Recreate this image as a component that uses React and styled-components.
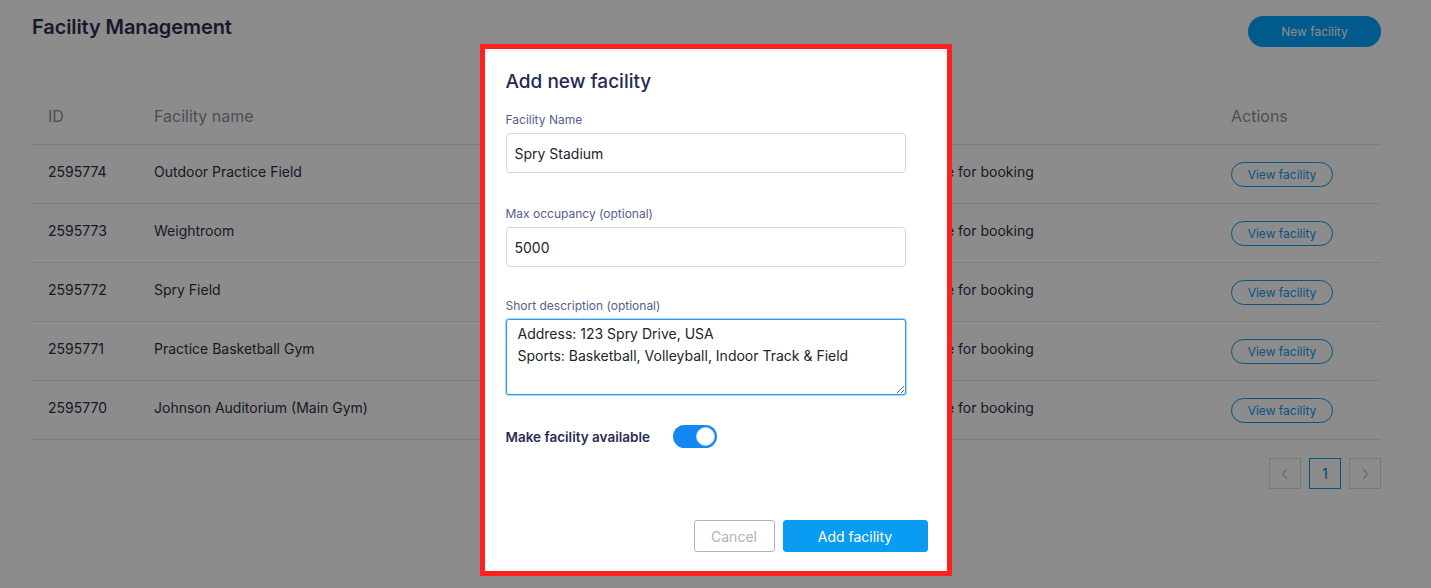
import React from "react";
import styled, { createGlobalStyle } from "styled-components";

const GlobalStyle = createGlobalStyle`
  * { box-sizing: border-box; }
  html, body { margin: 0; padding: 0; background: #ffffff; }
  body { font-family: Inter, "Noto Sans", "Liberation Sans", sans-serif; color: #2a2c4c; }
`;

const Page = styled.div`
  padding: 16px 50px 40px 32px;
  min-height: 588px;
`;

const Header = styled.header`
  display: flex;
  justify-content: space-between;
  align-items: flex-start;
`;

const PageTitle = styled.h1`
  margin: 0;
  font-size: 20px;
  line-height: 22px;
  font-weight: 600;
  color: #2b2e55;
  letter-spacing: -0.1px;
`;

const PrimaryPill = styled.button`
  width: 133px;
  height: 31px;
  border: none;
  border-radius: 16px;
  background: #00a4ff;
  color: #ffffff;
  font-family: inherit;
  font-size: 12px;
`;

const Table = styled.div`
  margin-top: 40px;
  display: grid;
  grid-template-columns: 106px 741px 336px 166px;
`;

const HeadCell = styled.div`
  height: 58px;
  display: flex;
  align-items: center;
  padding-left: 16px;
  font-size: 16px;
  color: #8b919b;
  border-bottom: 1px solid #e6e6e9;
`;

const Cell = styled.div`
  height: 59px;
  display: flex;
  align-items: center;
  padding-left: 16px;
  padding-bottom: 6px;
  font-size: 14px;
  color: #2e3048;
  border-bottom: 1px solid #e6e6e9;
  white-space: nowrap;
`;

const ActionCell = styled(Cell)`
  padding-bottom: 0;
`;

const OutlinePill = styled.button`
  width: 102px;
  height: 25px;
  border: 1px solid #0f9af0;
  border-radius: 13px;
  background: #ffffff;
  color: #0f9af0;
  font-family: inherit;
  font-size: 12px;
  padding: 0;
`;

const Pager = styled.nav`
  display: flex;
  justify-content: flex-end;
  gap: 8px;
  margin-top: 18px;
`;

const PageBox = styled.div`
  width: 32px;
  height: 31px;
  display: flex;
  align-items: center;
  justify-content: center;
  border: 1px solid ${(p) => (p.$active ? "#0f9af0" : "#dcdde2")};
  color: ${(p) => (p.$active ? "#0f9af0" : "#b8bac2")};
  font-size: 14px;
  font-weight: 500;
`;

const Overlay = styled.div`
  position: fixed;
  inset: 0;
  background: rgba(0, 0, 0, 0.45);
`;

const Modal = styled.div`
  position: fixed;
  top: 44px;
  left: 50%;
  transform: translateX(-50%);
  width: 472px;
  height: 532px;
  background: #ffffff;
  border: 5px solid #ff2020;
  padding: 21px 19px 19px 21px;
  display: flex;
  flex-direction: column;
`;

const ModalTitle = styled.h2`
  margin: 0;
  font-size: 19px;
  line-height: 24px;
  font-weight: 500;
  color: #262a52;
`;

const Form = styled.form`
  margin-top: 18px;
  display: flex;
  flex-direction: column;
  flex: 1;
`;

const Field = styled.div`
  display: flex;
  flex-direction: column;
  margin-bottom: ${(p) => p.$gap}px;
`;

const Label = styled.label`
  font-size: 12px;
  line-height: 16px;
  color: #56608c;
  margin-bottom: 5px;
`;

const TextInput = styled.input`
  width: 400px;
  height: 40px;
  border: 1px solid #d3d4de;
  border-radius: 4px;
  padding: 0 8px;
  font-family: inherit;
  font-size: 14px;
  color: #23242e;
  outline: none;
`;

const TextArea = styled.textarea`
  width: 400px;
  height: 76px;
  border: 1px solid #2d9cf0;
  box-shadow: 0 0 1px 1px #a6d3f8;
  border-radius: 3px;
  padding: 3px 11px 2px;
  font-family: inherit;
  font-size: 14px;
  line-height: 22px;
  color: #23242e;
  outline: none;
  resize: both;
`;

const ToggleRow = styled.div`
  display: flex;
  align-items: center;
  gap: 23px;
`;

const ToggleLabel = styled.span`
  font-size: 13.5px;
  font-weight: 600;
  color: #2a2d50;
`;

const Track = styled.div`
  width: 44px;
  height: 23px;
  border-radius: 12px;
  background: #1487f2;
  display: flex;
  align-items: center;
  justify-content: flex-end;
  padding-right: 2px;
`;

const Knob = styled.div`
  width: 19px;
  height: 19px;
  border-radius: 50%;
  background: #ffffff;
  border: 1px solid #b9dafc;
`;

const Footer = styled.div`
  margin-top: auto;
  display: flex;
  justify-content: flex-end;
  gap: 8px;
`;

const FooterButton = styled.button`
  height: 32px;
  width: ${(p) => p.$w}px;
  border-radius: 3px;
  font-family: inherit;
  font-size: 14px;
  padding: 0;
  border: 1px solid ${(p) => (p.$primary ? "#0a9bf2" : "#aeb0c6")};
  background: ${(p) => (p.$primary ? "#0a9bf2" : "#ffffff")};
  color: ${(p) => (p.$primary ? "#ffffff" : "#b1b3c2")};
`;

const rows = [
  ["2595774", "Outdoor Practice Field"],
  ["2595773", "Weightroom"],
  ["2595772", "Spry Field"],
  ["2595771", "Practice Basketball Gym"],
  ["2595770", "Johnson Auditorium (Main Gym)"],
];

const Chevron = ({ dir }) => (
  <svg width="8" height="12" viewBox="0 0 8 12" fill="none">
    <path
      d={dir === "left" ? "M6 1L1.5 6L6 11" : "M2 1L6.5 6L2 11"}
      stroke="#c4c6cc"
      strokeWidth="1.2"
    />
  </svg>
);

export default function App() {
  return (
    <>
      <GlobalStyle />
      <Page>
        <Header>
          <PageTitle>Facility Management</PageTitle>
          <PrimaryPill>New facility</PrimaryPill>
        </Header>
        <Table>
          <HeadCell>ID</HeadCell>
          <HeadCell>Facility name</HeadCell>
          <HeadCell>Status</HeadCell>
          <HeadCell>Actions</HeadCell>
          {rows.map(([id, name]) => (
            <React.Fragment key={id}>
              <Cell>{id}</Cell>
              <Cell>{name}</Cell>
              <Cell>Available for booking</Cell>
              <ActionCell>
                <OutlinePill>View facility</OutlinePill>
              </ActionCell>
            </React.Fragment>
          ))}
        </Table>
        <Pager>
          <PageBox>
            <Chevron dir="left" />
          </PageBox>
          <PageBox $active>1</PageBox>
          <PageBox>
            <Chevron dir="right" />
          </PageBox>
        </Pager>
      </Page>
      <Overlay />
      <Modal>
        <ModalTitle>Add new facility</ModalTitle>
        <Form onSubmit={(e) => e.preventDefault()}>
          <Field $gap={33}>
            <Label>Facility Name</Label>
            <TextInput defaultValue="Spry Stadium" />
          </Field>
          <Field $gap={31}>
            <Label>Max occupancy (optional)</Label>
            <TextInput defaultValue="5000" />
          </Field>
          <Field $gap={30}>
            <Label>Short description (optional)</Label>
            <TextArea
              defaultValue={
                "Address: 123 Spry Drive, USA\nSports: Basketball, Volleyball, Indoor Track & Field"
              }
            />
          </Field>
          <ToggleRow>
            <ToggleLabel>Make facility available</ToggleLabel>
            <Track>
              <Knob />
            </Track>
          </ToggleRow>
          <Footer>
            <FooterButton type="button" $w={81}>
              Cancel
            </FooterButton>
            <FooterButton type="submit" $primary $w={145}>
              Add facility
            </FooterButton>
          </Footer>
        </Form>
      </Modal>
    </>
  );
}
